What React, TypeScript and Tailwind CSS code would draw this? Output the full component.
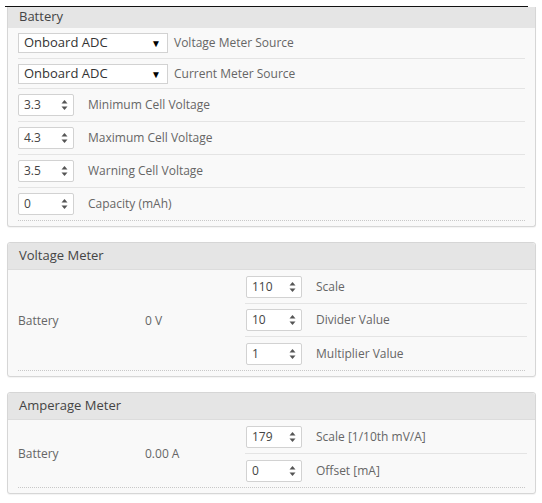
import React from 'react';

const font = { fontFamily: '"Open Sans", "Noto Sans", sans-serif' };

function Spinner() {
  return (
    <svg width="7" height="12" viewBox="0 0 7 12" className="shrink-0">
      <path d="M3.5 1 L6.5 4.5 L0.5 4.5 Z" fill="#555" />
      <path d="M3.5 11 L6.5 7.5 L0.5 7.5 Z" fill="#555" />
    </svg>
  );
}

function NumberBox({ value }: { value: string }) {
  return (
    <div className="flex h-[22px] w-[56px] shrink-0 items-center justify-between rounded-[2px] border border-[#d2d2d2] bg-white pl-[5px] pr-[5px] text-[12px] text-[#444]">
      <span>{value}</span>
      <Spinner />
    </div>
  );
}

function SelectBox({ value }: { value: string }) {
  return (
    <div className="flex h-[20px] w-[150px] shrink-0 items-center justify-between border border-[#d2d2d2] bg-white pl-[5px] pr-[6px] text-[13px] text-[#333]">
      <span>{value}</span>
      <span className="text-[10px] leading-none text-black">▼</span>
    </div>
  );
}

function Header({ title, cropped }: { title: string; cropped?: boolean }) {
  return (
    <div
      className={[
        'flex items-center bg-[#e5e5e5] pl-[11px] text-[13px] text-[#444]',
        cropped ? 'h-[21px] pb-[1px]' : 'h-[27px] rounded-t-[3px] border-b border-[#dcdcdc]',
      ].join(' ')}
    >
      {title}
    </div>
  );
}

function Row({ h, last, children }: { h: number; last?: boolean; children: React.ReactNode }) {
  return (
    <div
      className={[
        'flex items-center border-b',
        last ? 'border-dotted border-[#c8c8c8]' : 'border-[#e4e4e4]',
      ].join(' ')}
      style={{ height: h }}
    >
      {children}
    </div>
  );
}

function MeterPanel({
  title,
  value,
  fields,
}: {
  title: string;
  value: string;
  fields: Array<{ v: string; label: string }>;
}) {
  return (
    <div className="w-[529px] rounded-[3px] border border-[#d6d6d6] bg-[#f9f9f9] shadow-[0_1px_1px_rgba(0,0,0,0.05)]">
      <Header title={title} />
      <div className="px-[10px] pb-[5px] pt-[1px]">
        <div className="flex border-b border-dotted border-[#c8c8c8]">
          <div className="flex w-[127px] items-center text-[12px] text-[#666]">Battery</div>
          <div className="flex w-[100px] items-center text-[12px] text-[#666]">{value}</div>
          <div className="mr-[-2px] flex-1">
            {fields.map((f, i) => (
              <div
                key={f.label}
                className={[
                  'flex h-[33px] items-center gap-[14px] pl-[1px]',
                  i < fields.length - 1 ? 'border-b border-[#e4e4e4]' : '',
                ].join(' ')}
              >
                <NumberBox value={f.v} />
                <span className="text-[12px] text-[#666]">{f.label}</span>
              </div>
            ))}
          </div>
        </div>
      </div>
    </div>
  );
}

export default function App() {
  const cells = [
    { v: '3.3', label: 'Minimum Cell Voltage' },
    { v: '4.3', label: 'Maximum Cell Voltage' },
    { v: '3.5', label: 'Warning Cell Voltage' },
    { v: '0', label: 'Capacity (mAh)' },
  ];
  return (
    <div className="h-[503px] w-[542px] overflow-hidden bg-white pl-[7px] pt-[6px]" style={font}>
      <div className="ml-[-2px] h-px w-[523px] bg-[#111]" />
      <div className="w-[529px] rounded-b-[3px] border border-t-0 border-[#d6d6d6] bg-[#f9f9f9] shadow-[0_1px_1px_rgba(0,0,0,0.05)]">
        <Header title="Battery" cropped />
        <div className="px-[10px] pb-[5px]">
          <Row h={31}>
            <SelectBox value="Onboard ADC" />
            <span className="ml-[6px] text-[12px] text-[#666]">Voltage Meter Source</span>
          </Row>
          <Row h={30}>
            <SelectBox value="Onboard ADC" />
            <span className="ml-[6px] text-[12px] text-[#666]">Current Meter Source</span>
          </Row>
          {cells.map((c, i) => (
            <Row key={c.label} h={33} last={i === cells.length - 1}>
              <NumberBox value={c.v} />
              <span className="ml-[14px] text-[12px] text-[#666]">{c.label}</span>
            </Row>
          ))}
        </div>
      </div>

      <div className="mt-[15px]">
        <MeterPanel
          title="Voltage Meter"
          value="0 V"
          fields={[
            { v: '110', label: 'Scale' },
            { v: '10', label: 'Divider Value' },
            { v: '1', label: 'Multiplier Value' },
          ]}
        />
      </div>

      <div className="mt-[15px]">
        <MeterPanel
          title="Amperage Meter"
          value="0.00 A"
          fields={[
            { v: '179', label: 'Scale [1/10th mV/A]' },
            { v: '0', label: 'Offset [mA]' },
          ]}
        />
      </div>
    </div>
  );
}
